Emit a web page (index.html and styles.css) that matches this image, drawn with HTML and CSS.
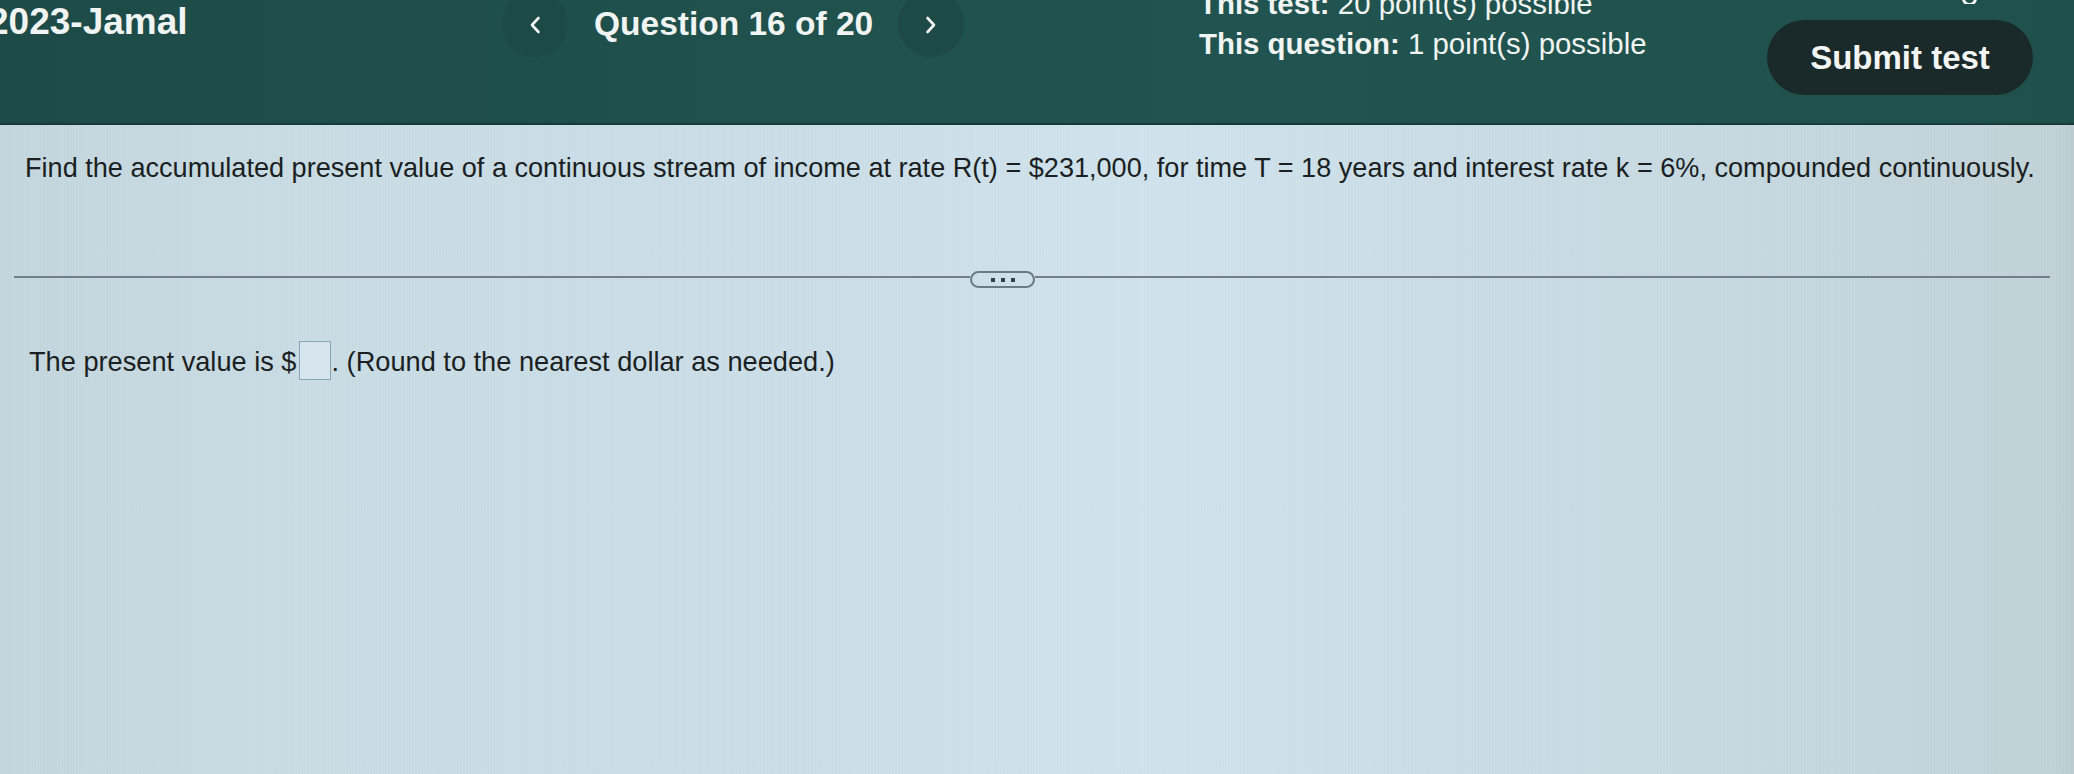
FILE: index.html
```html
<!DOCTYPE html>
<html lang="en">
<head>
<meta charset="utf-8">
<title>Question 16 of 20</title>
<link rel="stylesheet" href="styles.css">
</head>
<body>
<header class="topbar">
  <div class="title">2023-Jamal</div>
  <div class="nav-btn prev"><svg viewBox="0 0 12 18" width="12" height="18"><path d="M9.5 2 L3 9 L9.5 16" fill="none" stroke="#f2f5f4" stroke-width="2.6" stroke-linecap="round" stroke-linejoin="round"/></svg></div>
  <div class="qnum">Question 16 of 20</div>
  <div class="nav-btn next"><svg viewBox="0 0 12 18" width="12" height="18"><path d="M2.5 2 L9 9 L2.5 16" fill="none" stroke="#f2f5f4" stroke-width="2.6" stroke-linecap="round" stroke-linejoin="round"/></svg></div>
  <div class="spacer"></div>
  <div class="points">
    <div class="pline"><b>This test:</b> 20 point(s) possible</div>
    <div class="pline"><b>This question:</b> 1 point(s) possible</div>
  </div>
  <div class="actions">
    <div class="peek"><span class="ring"></span></div>
    <button class="submit">Submit test</button>
  </div>
</header>
<main class="content">
  <p class="question">Find the accumulated present value of a continuous stream of income at rate R(t) = $231,000, for time T = 18 years and interest rate k = 6%, compounded continuously.</p>
  <div class="divider">
    <span class="rule rule-left"></span>
    <span class="more"><i></i><i></i><i></i></span>
    <span class="rule rule-right"></span>
  </div>
  <p class="answer">The present value is $<span class="box"></span>. (Round to the nearest dollar as needed.)</p>
</main>
</body>
</html>
```

FILE: styles.css
```css
html, body {
  margin: 0;
  padding: 0;
}
body {
  width: 2074px;
  height: 774px;
  overflow: hidden;
  font-family: "Liberation Sans", Arial, sans-serif;
  color: #1b1f22;
  background:
    repeating-linear-gradient(90deg, rgba(255,255,255,0.06) 0 1px, rgba(0,0,0,0) 1px 3px),
    linear-gradient(90deg, #c3d5dc 0%, #c8dbe3 15%, #cadde7 40%, #cfe2ec 55%, #c9dce5 70%, #c4d6dd 88%, #c0d1d6 99%, #bacbd0 100%);
}
.topbar {
  height: 123px;
  border-bottom: 2px solid #173b38;
  background: linear-gradient(90deg, #1e4b48 0%, #20524e 45%, #215450 60%, #1f504c 100%);
  color: #f0f4f3;
  display: grid;
  grid-template-columns: 502px 66px 330px 66px 235px 568px 266px 1fr;
  align-items: start;
  overflow: hidden;
}
.title {
  font-weight: bold;
  font-size: 37px;
  line-height: 44px;
  margin-left: -12px;
  white-space: nowrap;
}
.nav-btn {
  width: 66px;
  height: 66px;
  margin-top: -9px;
  border-radius: 50%;
  background: #1d4a47;
  display: flex;
  align-items: center;
  justify-content: center;
}
.nav-btn svg {
  display: block;
  margin-top: 2px;
}
.qnum {
  font-weight: bold;
  font-size: 33.5px;
  line-height: 44px;
  margin-top: 2px;
  padding-left: 26px;
  white-space: nowrap;
}
.points {
  margin-top: -16px;
  font-size: 29.4px;
  line-height: 40px;
  white-space: nowrap;
}
.pline b {
  font-weight: bold;
}
.actions {
  display: flex;
  flex-direction: column;
}
.peek {
  height: 4px;
  overflow: hidden;
  margin-left: 194px;
  width: 16px;
}
.ring {
  display: block;
  width: 9px;
  height: 9px;
  margin-top: -9px;
  margin-left: 1px;
  border: 3px solid #f2f4f3;
  border-radius: 50%;
}
.submit {
  margin-top: 16px;
  width: 266px;
  height: 75px;
  border: none;
  border-radius: 38px;
  background: #1a2929;
  color: #f3f5f5;
  font-family: "Liberation Sans", Arial, sans-serif;
  font-weight: bold;
  font-size: 33px;
  padding: 0;
  display: flex;
  align-items: center;
  justify-content: center;
}
.content {
  padding-top: 25px;
}
.question {
  margin: 0 0 0 25px;
  font-size: 27.1px;
  line-height: 36px;
  white-space: nowrap;
}
.divider {
  display: flex;
  align-items: flex-start;
  margin: 85px 0 0 14px;
  width: 2036px;
  height: 17px;
}
.rule {
  height: 2px;
  margin-top: 5px;
  background: #737f8b;
}
.rule-left {
  width: 956px;
}
.rule-right {
  flex: 1;
}
.more {
  width: 61px;
  height: 13px;
  border: 2px solid #6c7985;
  border-radius: 9px;
  display: flex;
  align-items: center;
  justify-content: center;
  gap: 6px;
}
.more i {
  display: block;
  width: 4px;
  height: 4px;
  background: #343e49;
}
.answer {
  margin: 50px 0 0 29px;
  font-size: 27.2px;
  line-height: 48px;
  white-space: nowrap;
}
.box {
  display: inline-block;
  width: 30px;
  height: 37px;
  border: 1.5px solid #8ea4b6;
  background: #d6e4ec;
  vertical-align: -9px;
  margin: 0 1px 0 2px;
}
```
